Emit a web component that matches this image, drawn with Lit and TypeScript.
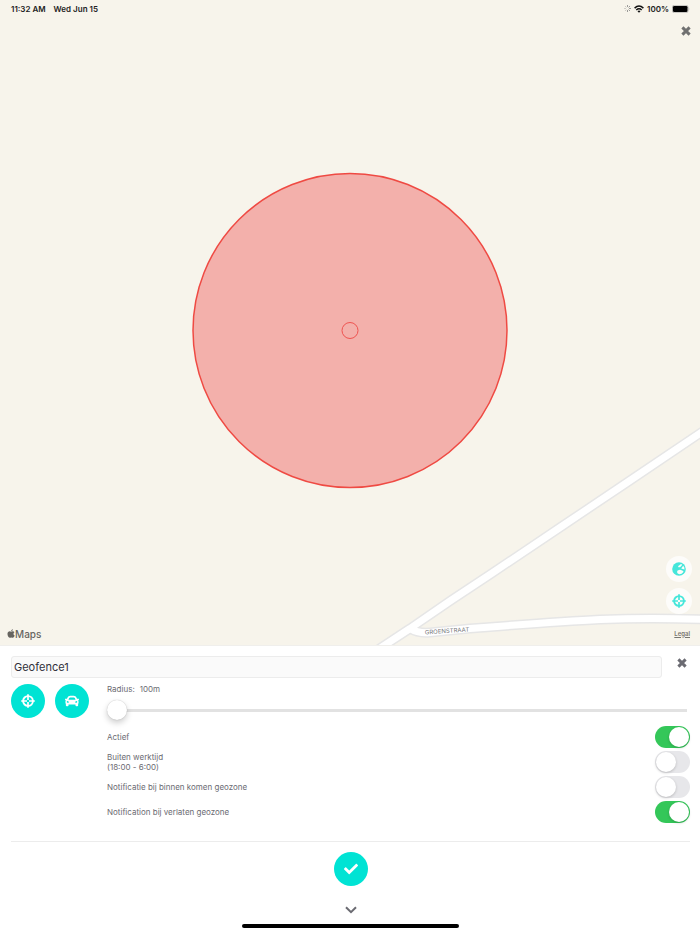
import { LitElement, html, svg, css } from "lit";
import { customElement, state } from "lit/decorators.js";

const CAR =
  "M499.99 176h-59.87l-16.64-41.6C406.38 91.63 365.57 64 319.5 64h-127c-46.06 0-86.88 27.63-103.99 70.4L71.87 176H12.01C4.2 176-1.53 183.34.37 190.91l6 24C7.7 220.25 12.5 224 18.01 224h20.07C24.65 235.73 16 252.78 16 272v48c0 16.12 6.16 30.67 16 41.93V416c0 17.67 14.33 32 32 32h32c17.67 0 32-14.33 32-32v-32h256v32c0 17.67 14.33 32 32 32h32c17.67 0 32-14.33 32-32v-54.07c9.84-11.25 16-25.8 16-41.93v-48c0-19.22-8.65-36.27-22.07-48H494c5.51 0 10.31-3.75 11.64-9.09l6-24c1.89-7.57-3.84-14.91-11.65-14.91zm-352.06-17.83c7.29-18.22 24.94-30.17 44.57-30.17h127c19.63 0 37.28 11.95 44.57 30.17L384 208H128l19.93-49.83zM96 319.8c-19.2 0-32-12.76-32-31.9S76.8 256 96 256s48 28.71 48 47.85-28.8 15.95-48 15.95zm320 0c-19.2 0-48 3.19-48-15.95S396.8 256 416 256s32 12.76 32 31.9-12.8 31.9-32 31.9z";
const CHECK =
  "M173.898 439.404l-166.4-166.4c-9.997-9.997-9.997-26.206 0-36.204l36.203-36.204c9.997-9.998 26.207-9.998 36.204 0L192 312.69 432.095 72.596c9.997-9.997 26.207-9.997 36.204 0l36.203 36.204c9.997 9.997 9.997 26.206 0 36.204l-294.4 294.401c-9.998 9.997-26.207 9.997-36.204-.001z";
const APPLE =
  "M318.7 268.7c-.2-36.7 16.4-64.4 50-84.8-18.8-26.9-47.2-41.7-84.7-44.6-35.5-2.8-74.3 20.7-88.5 20.7-15 0-49.4-19.7-76.4-19.7C63.3 141.2 4 184.8 4 273.5q0 39.3 14.4 81.2c12.8 36.7 59 126.7 107.2 125.2 25.2-.6 43-17.9 75.8-17.9 31.8 0 48.3 17.9 76.4 17.9 48.6-.7 90.4-82.5 102.6-119.3-65.2-30.7-61.7-90-61.7-91.9zm-56.6-164.2c27.3-32.4 24.8-61.9 24-72.5-24.1 1.4-52 16.4-67.9 34.9-17.5 19.8-27.8 44.3-25.6 71.9 26.1 2 49.9-11.4 69.5-34.3z";

const DIAGONAL = "M372 654L410 629Q450 601 493 573L560 528L627 483L710 427";
const STREET = "M410 629Q418 634 430 633L470 629Q560 622 600 620Q650 618 710 620";

const glyph = (d: string) =>
  html`<svg class="glyph" viewBox="0 0 512 512" aria-hidden="true"><path d=${d} /></svg>`;
const crosshairs = html`<svg class="glyph" viewBox="0 0 14 14" aria-hidden="true">
  <circle cx="7" cy="7" r="4.9" fill="none" stroke="currentColor" stroke-width="1.9" />
  <path d="M7 .2V6M7 8V13.8M.2 7H6M8 7H13.8" stroke="currentColor" stroke-width="1.7" />
</svg>`;
const cross = html`<svg class="cross" viewBox="0 0 10 10" aria-hidden="true">
  <path d="M1.4 1.4L8.6 8.6M8.6 1.4L1.4 8.6" />
</svg>`;

interface Setting {
  id: string;
  label: string;
  detail?: string;
  on: boolean;
}

@customElement("app-root")
export class AppRoot extends LitElement {
  static styles = css`
    :host {
      display: flex;
      flex-direction: column;
      min-height: 100vh;
      background: #fff;
      color: #6b6b72;
      font: 8px/10px Inter, "Liberation Sans", sans-serif;
    }
    * { box-sizing: border-box; }
    button {
      display: grid;
      place-items: center;
      padding: 0;
      border: 0;
      background: none;
      color: inherit;
      cursor: pointer;
    }
    svg { display: block; }
    .map {
      position: relative;
      flex: 1;
      display: flex;
      flex-direction: column;
      justify-content: space-between;
      min-height: 320px;
      background: #f7f4eb;
      border-bottom: 1px solid #f0efec;
    }
    .canvas { position: absolute; inset: 0; width: 100%; height: 100%; }
    .casing { fill: none; stroke: #e6e6e6; stroke-width: 10; }
    .road { fill: none; stroke: #fff; stroke-width: 7; }
    .street {
      fill: #77777a;
      font-size: 6px;
      stroke: #fff;
      stroke-width: 1px;
      paint-order: stroke;
    }
    .zone { fill: #ee4b4b; fill-opacity: 0.4; stroke: #ef4a43; stroke-width: 1.5; }
    .centre { fill: none; stroke: #ef5350; }
    .top, .bottom { position: relative; }
    .status {
      display: flex;
      justify-content: space-between;
      align-items: center;
      height: 17px;
      padding: 0 10px 0 11px;
      color: #222;
      font-weight: 600;
    }
    .group { display: flex; align-items: center; gap: 8px; }
    .tight { gap: 3px; }
    .spinner { width: 7px; height: 7px; }
    .wifi { width: 10px; height: 8px; }
    .battery { width: 18px; height: 8px; }
    .cross { width: 10px; height: 10px; fill: none; stroke: currentColor; stroke-width: 3; }
    .dismiss { width: 16px; height: 14px; }
    .corner { margin: 7px 6px 0 auto; color: #707070; }
    .tools {
      display: flex;
      flex-direction: column;
      align-items: flex-end;
      gap: 6px;
      padding: 0 8px;
    }
    .tool {
      width: 26px;
      height: 26px;
      border-radius: 50%;
      background: #fdfcfa;
      color: #45e6da;
    }
    .glyph { width: 14px; height: 14px; fill: currentColor; }
    .attribution {
      display: flex;
      justify-content: space-between;
      align-items: center;
      height: 31px;
      padding: 8px 10px 0 7px;
    }
    .brand {
      display: flex;
      align-items: center;
      color: #66645f;
      font-size: 10px;
      font-weight: 500;
    }
    .apple { width: 8px; height: 9px; fill: currentColor; }
    .legal { color: #77756f; font-size: 6px; font-weight: 600; }
    .panel { padding: 10px 10px 6px 11px; }
    .title { display: flex; align-items: flex-start; gap: 12px; }
    .name {
      flex: 1;
      min-width: 0;
      height: 22px;
      padding: 0 2px;
      border: 1px solid #ececec;
      border-radius: 3px;
      background: #fafafa;
      color: #30303a;
      font: 11px/20px Inter, "Liberation Sans", sans-serif;
    }
    .body {
      display: flex;
      gap: 18px;
      padding: 6px 0 17px;
    }
    .actions { display: flex; gap: 10px; }
    .round {
      width: 34px;
      height: 34px;
      border-radius: 50%;
      background: #00e3d4;
      color: #fff;
    }
    .form { flex: 1; min-width: 0; }
    .radius { display: flex; gap: 5px; }
    .slider {
      display: block;
      appearance: none;
      width: calc(100% - 3px);
      height: 20px;
      margin: 6px 0 4px;
      background: linear-gradient(#e2e2e2, #e2e2e2) center / 100% 3px no-repeat;
    }
    .slider::-webkit-slider-thumb {
      appearance: none;
      width: 20px;
      height: 20px;
      border-radius: 50%;
      background: #fff;
      box-shadow: 0 0 1px #0004, 0 3px 6px #0003;
    }
    .row {
      display: flex;
      justify-content: space-between;
      align-items: center;
      height: 25px;
    }
    .detail { display: block; }
    .switch {
      appearance: none;
      width: 35px;
      height: 22px;
      margin: 0;
      padding: 1px;
      border-radius: 11px;
      background: #e7e7ea;
    }
    .switch::before {
      content: "";
      display: block;
      width: 20px;
      height: 20px;
      border-radius: 50%;
      background: #fff;
      box-shadow: 0 1px 3px #0003;
    }
    .switch:checked { padding-left: 14px; background: #34c759; }
    .footer {
      display: flex;
      flex-direction: column;
      align-items: center;
      padding-top: 10px;
      border-top: 1px solid #ececec;
    }
    .collapse { width: 34px; height: 20px; margin: 14px 0 4px; }
    .chevron { width: 12px; height: 8px; fill: none; stroke: currentColor; stroke-width: 2; }
    .home { width: 32%; height: 4px; border-radius: 2px; background: #000; }
  `;

  @state() private radius = 100;
  @state() private settings: Setting[] = [
    { id: "active", label: "Actief", on: true },
    { id: "hours", label: "Buiten werktijd", detail: "(18:00 - 6:00)", on: false },
    { id: "enter", label: "Notificatie bij binnen komen geozone", on: false },
    { id: "leave", label: "Notification bij verlaten geozone", on: true },
  ];

  private toggle(id: string) {
    this.settings = this.settings.map((s) => (s.id === id ? { ...s, on: !s.on } : s));
  }

  private renderMap() {
    return html`<svg class="canvas" viewBox="0 0 700 646" preserveAspectRatio="xMidYMid slice" aria-hidden="true">
      <path class="casing" d=${STREET} /><path class="casing" d=${DIAGONAL} />
      <path class="road" d=${STREET} /><path class="road" d=${DIAGONAL} />
      <text class="street" x="425" y="635" transform="rotate(-4 425 635)">GROENSTRAAT</text>
      <circle class="zone" cx="350" cy="331" r="157" />
      <circle class="centre" cx="350" cy="331" r="8" />
    </svg>`;
  }

  private renderStatus() {
    return html`<div class="status">
      <div class="group"><span>11:32 AM</span><span>Wed Jun 15</span></div>
      <div class="group tight">
        <svg class="spinner" viewBox="0 0 7 7" fill="none" stroke="#777" stroke-width=".8" aria-hidden="true">
          ${[0, 45, 90, 135, 180, 225, 270, 315].map(
            (a) => svg`<path d="M3.5 0V2" opacity=${a > 200 ? 0.4 : 0.9} transform="rotate(${a} 3.5 3.5)" />`
          )}
        </svg>
        <svg class="wifi" viewBox="0 0 10 8" fill="none" stroke="#111" stroke-width="1.5" aria-hidden="true">
          <path d="M.6 3.1Q5-1.1 9.4 3.1M2.3 5Q5 2.5 7.7 5" />
          <path d="M5 7.8L3.5 6.2Q5 5 6.5 6.2Z" fill="#111" stroke="none" />
        </svg>
        <span>100%</span>
        <svg class="battery" viewBox="0 0 18 8" aria-hidden="true">
          <rect x=".3" y=".3" width="15.8" height="7.4" rx="2" fill="none" stroke="#999" stroke-width=".6" />
          <rect x=".9" y=".9" width="14.6" height="6.2" rx="1.4" />
          <path d="M16.8 2.7Q18 4 16.8 5.3Z" fill="#999" />
        </svg>
      </div>
    </div>`;
  }

  render() {
    return html`
      <section class="map">
        ${this.renderMap()}
        <div class="top">
          ${this.renderStatus()}
          <button class="dismiss corner" aria-label="Sluiten">${cross}</button>
        </div>
        <div class="bottom">
          <div class="tools">
            <button class="tool" aria-label="Kaarttype">
              <svg class="glyph" viewBox="0 0 14 14" aria-hidden="true">
                <circle cx="7" cy="7" r="6.8" />
                <g fill="#fdfcfa">
                  <path d="M5 10Q5.2 8.2 7 8Q8.5 7.6 10 8.4Q11.8 8.8 11.4 10Q9.8 12.2 7.4 12.2Q5.2 11.8 5 10Z" />
                  <path d="M6 4.2L9 2.1 10.3 2.7 8.6 4.8 6.8 5.4Z" />
                  <path d="M9.2 6.4L11.2 3.8 12.3 5.6 12.5 7.6Z" />
                </g>
              </svg>
            </button>
            <button class="tool" aria-label="Centreren">${crosshairs}</button>
          </div>
          <div class="attribution">
            <span class="brand">
              <svg class="apple" viewBox="0 20 376 470" aria-hidden="true"><path d=${APPLE} /></svg>Maps
            </span>
            <a class="legal" href="#legal">Legal</a>
          </div>
        </div>
      </section>
      <section class="panel">
        <div class="title">
          <input class="name" type="text" aria-label="Naam" value="Geofence1" />
          <button class="dismiss" aria-label="Verwijderen">${cross}</button>
        </div>
        <div class="body">
          <div class="actions">
            <button class="round" aria-label="Mijn locatie">${crosshairs}</button>
            <button class="round" aria-label="Voertuig">${glyph(CAR)}</button>
          </div>
          <div class="form">
            <label class="radius" for="radius"><span>Radius:</span><span>${this.radius}m</span></label>
            <input
              class="slider" id="radius" type="range" min="100" max="5000" step="50"
              .value=${String(this.radius)}
              @input=${(e: Event) => (this.radius = Number((e.target as HTMLInputElement).value))}
            />
            ${this.settings.map(
              (s) => html`<div class="row">
                <label for=${s.id}>${s.label}${s.detail ? html`<span class="detail">${s.detail}</span>` : ""}</label>
                <input class="switch" type="checkbox" role="switch" id=${s.id} .checked=${s.on}
                  @change=${() => this.toggle(s.id)} />
              </div>`
            )}
          </div>
        </div>
        <div class="footer">
          <button class="round" aria-label="Opslaan">${glyph(CHECK)}</button>
          <button class="collapse" aria-label="Inklappen">
            <svg class="chevron" viewBox="0 0 12 8" aria-hidden="true"><path d="M1 1.2L6 6.2L11 1.2" /></svg>
          </button>
          <div class="home"></div>
        </div>
      </section>
    `;
  }
}
